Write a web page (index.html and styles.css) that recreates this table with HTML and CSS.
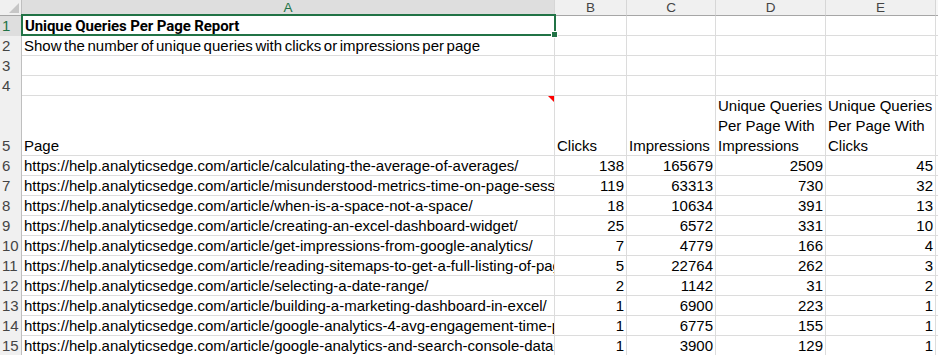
FILE: index.html
```html
<!DOCTYPE html>
<html>
<head>
<meta charset="utf-8">
<link rel="stylesheet" href="styles.css">
</head>
<body>
<div class="sheet">
  <div class="grid">
    <div class="corner"><span class="corner-tri"></span></div>
    <div class="colhdr colhdr-sel">A</div>
    <div class="colhdr">B</div>
    <div class="colhdr">C</div>
    <div class="colhdr">D</div>
    <div class="colhdr">E</div>
    <div class="colhdr colhdr-end"></div>

    <div class="rowhdr rowhdr-sel">1</div>
    <div class="cell"><span class="txt title">Unique Queries Per Page Report</span></div>
    <div class="cell"></div><div class="cell"></div><div class="cell"></div><div class="cell"></div><div class="cell end"></div>

    <div class="rowhdr">2</div>
    <div class="cell"><span class="txt desc">Show the number of unique queries with clicks or impressions per page</span></div>
    <div class="cell"></div><div class="cell"></div><div class="cell"></div><div class="cell"></div><div class="cell end"></div>

    <div class="rowhdr">3</div>
    <div class="cell"></div><div class="cell"></div><div class="cell"></div><div class="cell"></div><div class="cell"></div><div class="cell end"></div>

    <div class="rowhdr">4</div>
    <div class="cell"></div><div class="cell"></div><div class="cell"></div><div class="cell"></div><div class="cell"></div><div class="cell end"></div>

    <div class="rowhdr">5</div>
    <div class="cell comment"><span class="txt">Page</span><span class="note"></span></div>
    <div class="cell"><span class="txt">Clicks</span></div>
    <div class="cell"><span class="txt">Impressions</span></div>
    <div class="cell"><span class="txt">Unique Queries<br>Per Page With<br>Impressions</span></div>
    <div class="cell"><span class="txt">Unique Queries<br>Per Page With<br>Clicks</span></div>
    <div class="cell end"></div>

    <div class="rowhdr">6</div>
    <div class="cell"><span class="txt">https://help.analyticsedge.com/article/calculating-the-average-of-averages/</span></div>
    <div class="cell num"><span class="txt">138</span></div>
    <div class="cell num"><span class="txt">165679</span></div>
    <div class="cell num"><span class="txt">2509</span></div>
    <div class="cell num"><span class="txt">45</span></div>
    <div class="cell end"></div>

    <div class="rowhdr">7</div>
    <div class="cell"><span class="txt">https://help.analyticsedge.com/article/misunderstood-metrics-time-on-page-session-duration/</span></div>
    <div class="cell num"><span class="txt">119</span></div>
    <div class="cell num"><span class="txt">63313</span></div>
    <div class="cell num"><span class="txt">730</span></div>
    <div class="cell num"><span class="txt">32</span></div>
    <div class="cell end"></div>

    <div class="rowhdr">8</div>
    <div class="cell"><span class="txt">https://help.analyticsedge.com/article/when-is-a-space-not-a-space/</span></div>
    <div class="cell num"><span class="txt">18</span></div>
    <div class="cell num"><span class="txt">10634</span></div>
    <div class="cell num"><span class="txt">391</span></div>
    <div class="cell num"><span class="txt">13</span></div>
    <div class="cell end"></div>

    <div class="rowhdr">9</div>
    <div class="cell"><span class="txt">https://help.analyticsedge.com/article/creating-an-excel-dashboard-widget/</span></div>
    <div class="cell num"><span class="txt">25</span></div>
    <div class="cell num"><span class="txt">6572</span></div>
    <div class="cell num"><span class="txt">331</span></div>
    <div class="cell num"><span class="txt">10</span></div>
    <div class="cell end"></div>

    <div class="rowhdr">10</div>
    <div class="cell"><span class="txt">https://help.analyticsedge.com/article/get-impressions-from-google-analytics/</span></div>
    <div class="cell num"><span class="txt">7</span></div>
    <div class="cell num"><span class="txt">4779</span></div>
    <div class="cell num"><span class="txt">166</span></div>
    <div class="cell num"><span class="txt">4</span></div>
    <div class="cell end"></div>

    <div class="rowhdr">11</div>
    <div class="cell"><span class="txt">https://help.analyticsedge.com/article/reading-sitemaps-to-get-a-full-listing-of-pages/</span></div>
    <div class="cell num"><span class="txt">5</span></div>
    <div class="cell num"><span class="txt">22764</span></div>
    <div class="cell num"><span class="txt">262</span></div>
    <div class="cell num"><span class="txt">3</span></div>
    <div class="cell end"></div>

    <div class="rowhdr">12</div>
    <div class="cell"><span class="txt">https://help.analyticsedge.com/article/selecting-a-date-range/</span></div>
    <div class="cell num"><span class="txt">2</span></div>
    <div class="cell num"><span class="txt">1142</span></div>
    <div class="cell num"><span class="txt">31</span></div>
    <div class="cell num"><span class="txt">2</span></div>
    <div class="cell end"></div>

    <div class="rowhdr">13</div>
    <div class="cell"><span class="txt">https://help.analyticsedge.com/article/building-a-marketing-dashboard-in-excel/</span></div>
    <div class="cell num"><span class="txt">1</span></div>
    <div class="cell num"><span class="txt">6900</span></div>
    <div class="cell num"><span class="txt">223</span></div>
    <div class="cell num"><span class="txt">1</span></div>
    <div class="cell end"></div>

    <div class="rowhdr">14</div>
    <div class="cell"><span class="txt">https://help.analyticsedge.com/article/google-analytics-4-avg-engagement-time-per-session/</span></div>
    <div class="cell num"><span class="txt">1</span></div>
    <div class="cell num"><span class="txt">6775</span></div>
    <div class="cell num"><span class="txt">155</span></div>
    <div class="cell num"><span class="txt">1</span></div>
    <div class="cell end"></div>

    <div class="rowhdr">15</div>
    <div class="cell"><span class="txt">https://help.analyticsedge.com/article/google-analytics-and-search-console-data-together/</span></div>
    <div class="cell num"><span class="txt">1</span></div>
    <div class="cell num"><span class="txt">3900</span></div>
    <div class="cell num"><span class="txt">129</span></div>
    <div class="cell num"><span class="txt">1</span></div>
    <div class="cell end"></div>
  </div>
  <div class="selection"><span class="handle"></span></div>
</div>
</body>
</html>
```
FILE: styles.css
```css
* { box-sizing: border-box; }
html, body { margin: 0; padding: 0; background: #ffffff; }
body { font-family: "Liberation Sans", Arial, sans-serif; font-size: 15px; color: #000; overflow: hidden; }

.sheet { position: relative; width: 938px; height: 355px; overflow: hidden; }

.grid {
  display: grid;
  grid-template-columns: 22px 533px 72px 89px 110px 110px 2px;
  grid-template-rows: 16px repeat(4, 20px) 60px repeat(10, 20px);
}

.corner {
  position: relative;
  background: #f0f0f0;
  border-right: 1px solid #bfbfbf;
  border-bottom: 1px solid #a6a6a6;
}
.corner-tri {
  position: absolute;
  right: 2px;
  bottom: 2px;
  width: 0; height: 0;
  border-left: 10px solid transparent;
  border-bottom: 10px solid #c6c6c6;
}

.colhdr {
  background: #f0f0f0;
  border-right: 1px solid #d6d6d6;
  border-bottom: 1px solid #a6a6a6;
  color: #444;
  font-size: 13.5px;
  line-height: 14px;
  text-align: center;
  padding-top: 1px;
}
.colhdr-sel { background: #dedede; color: #217346; }
.colhdr-end { border-right: none; background: #f7f7f7; }

.rowhdr {
  background: #f0f0f0;
  border-right: 1px solid #bfbfbf;
  color: #444;
  font-size: 15px;
  line-height: 20px;
  padding-left: 2px;
  display: flex;
  align-items: flex-end;
}
.rowhdr-sel { background: #dedede; color: #217346; }

.cell {
  position: relative;
  border-right: 1px solid #dcdcdc;
  border-bottom: 1px solid #dcdcdc;
  padding: 0 2px;
  display: flex;
  align-items: flex-end;
  overflow: hidden;
  white-space: nowrap;
}
.cell.end { border-right: none; }
.cell.num { justify-content: flex-end; }

.txt { display: block; line-height: 20px; margin-bottom: -1px; }

.title { font-family: Roboto, "Liberation Sans", sans-serif; font-weight: bold; font-size: 15px; letter-spacing: -0.1px; padding-left: 1px; }
.desc { word-spacing: -1.6px; }

.note {
  position: absolute;
  top: 0;
  right: 0;
  width: 0; height: 0;
  border-left: 6px solid transparent;
  border-top: 6px solid #ff0000;
}

.selection {
  position: absolute;
  left: 21px;
  top: 14px;
  width: 535px;
  height: 22px;
  border: 2px solid #217346;
}
.handle {
  position: absolute;
  right: -4px;
  bottom: -4px;
  width: 7px;
  height: 7px;
  background: #217346;
  border: 1px solid #ffffff;
}
```
